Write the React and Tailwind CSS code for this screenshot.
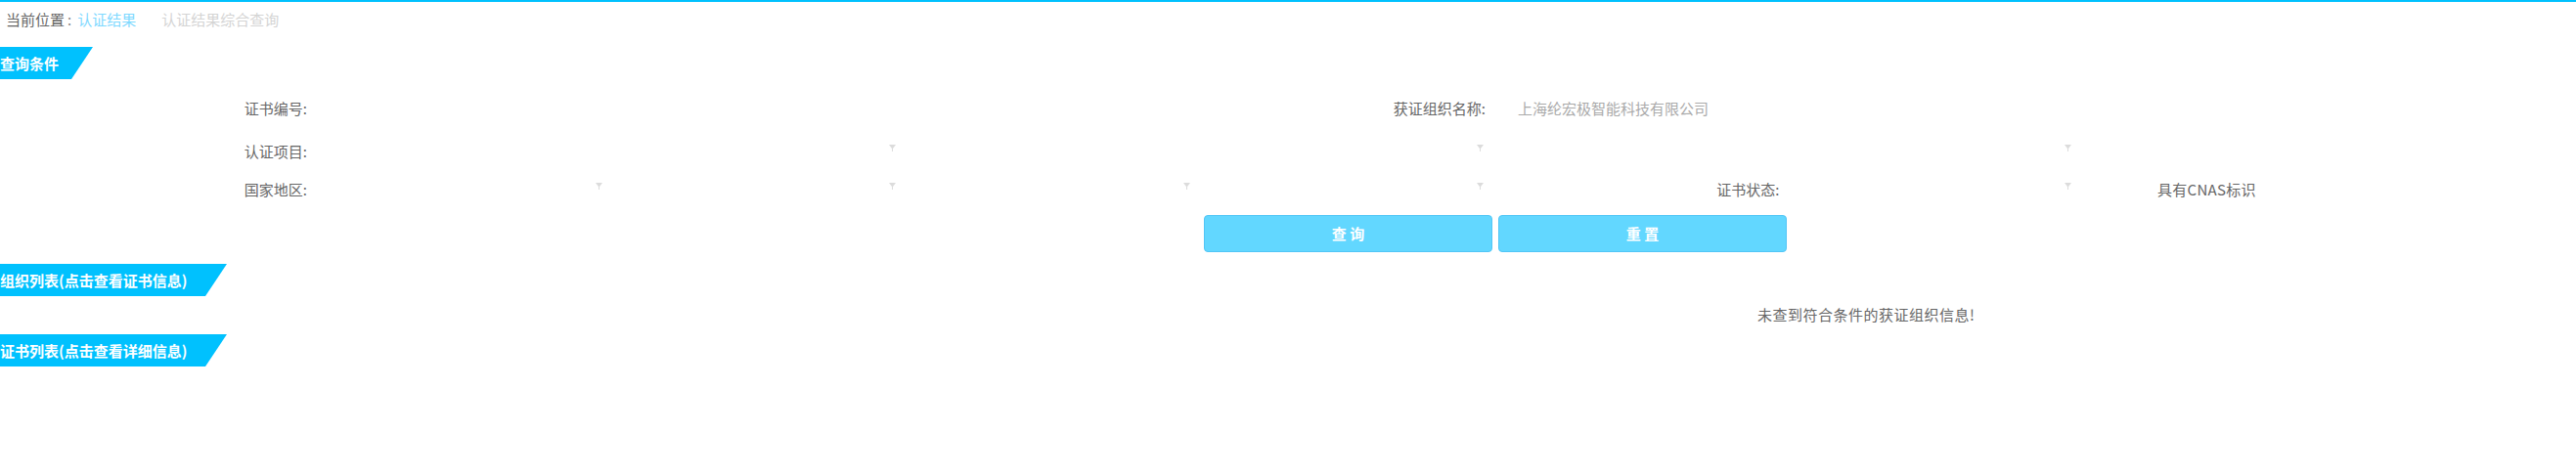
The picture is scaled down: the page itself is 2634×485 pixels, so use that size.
import React from "react";

const font = { fontFamily: '"Noto Sans CJK SC", "Noto Sans", sans-serif' };

// tiny select arrow shown at the right edge of an empty select
const Arrow = () => (
  <svg width="7" height="7" viewBox="0 0 7 7" className="mb-[8px]">
    <polygon points="0,0 7,0 4,4 4,7 3,7 3,4" fill="#dcdcdc" />
  </svg>
);

const SectionBar = ({ title, width }) => (
  <div
    className={`h-[33px] bg-[#00c1fe] text-white font-bold text-[15px] leading-[33px] whitespace-nowrap [clip-path:polygon(0_0,100%_0,calc(100%-22px)_100%,0_100%)] ${width}`}
  >
    {title}
  </div>
);

const Label = ({ children, className = "" }) => (
  <div className={`text-right text-[#666] whitespace-nowrap ${className}`}>{children}</div>
);

const SelectCell = ({ className = "" }) => (
  <div className={`flex justify-end items-center pr-[2px] h-full ${className}`}>
    <Arrow />
  </div>
);

export default function App() {
  return (
    <div
      className="w-[2634px] h-[485px] bg-white border-t-2 border-[#00c1fe] text-[15px] overflow-hidden"
      style={font}
    >
      {/* Breadcrumb */}
      <div className="h-[36px] flex items-center pl-[6px] whitespace-nowrap">
        <span className="text-[#666]">当前位置</span>
        <span className="text-[#888] ml-[3px]">:</span>
        <span className="text-[#7fd9ff] ml-[6px]">认证结果</span>
        <span className="text-[#d4d4d4] ml-[26px]">认证结果综合查询</span>
      </div>

      <div className="mt-[10px]">
        <SectionBar title="查询条件" width="w-[95px]" />
      </div>

      {/* Query form */}
      <div className="grid grid-cols-[317px_repeat(7,300.5px)_1fr] h-[28px] mt-[16px] items-center">
        <Label className="pr-[3px]">证书编号:</Label>
        <div className="col-span-3" />
        <Label>获证组织名称:</Label>
        <div className="col-span-3 pl-[33px] text-[#aaa] whitespace-nowrap">上海纶宏极智能科技有限公司</div>
        <div />
      </div>

      <div className="grid grid-cols-[317px_repeat(7,300.5px)_1fr] h-[28px] mt-[16px] items-center">
        <Label className="pr-[3px]">认证项目:</Label>
        <SelectCell className="col-span-2" />
        <SelectCell className="col-span-2" />
        <SelectCell className="col-span-2" />
        <div />
        <div />
      </div>

      <div className="grid grid-cols-[317px_repeat(7,300.5px)_1fr] h-[28px] mt-[11px] items-center">
        <Label className="pr-[3px]">国家地区:</Label>
        <SelectCell />
        <SelectCell />
        <SelectCell />
        <SelectCell />
        <Label>证书状态:</Label>
        <SelectCell />
        <div className="pl-[86px] text-[#666] whitespace-nowrap tracking-[0.3px]">具有CNAS标识</div>
        <div />
      </div>

      {/* Buttons */}
      <div className="flex gap-[6px] pl-[1231px] mt-[12px]">
        <button className="w-[295px] h-[38px] rounded-[4px] bg-[#62d7ff] border border-[#52c6f6] text-white font-bold text-[15px]">
          查 询
        </button>
        <button className="w-[295px] h-[38px] rounded-[4px] bg-[#62d7ff] border border-[#52c6f6] text-white font-bold text-[15px]">
          重 置
        </button>
      </div>

      <div className="mt-[12px]">
        <SectionBar title="组织列表(点击查看证书信息)" width="w-[232px]" />
      </div>

      <div className="h-[39px] flex items-center pl-[1797px] text-[#666] whitespace-nowrap tracking-[0.5px]">
        未查到符合条件的获证组织信息!
      </div>

      <SectionBar title="证书列表(点击查看详细信息)" width="w-[232px]" />
    </div>
  );
}
